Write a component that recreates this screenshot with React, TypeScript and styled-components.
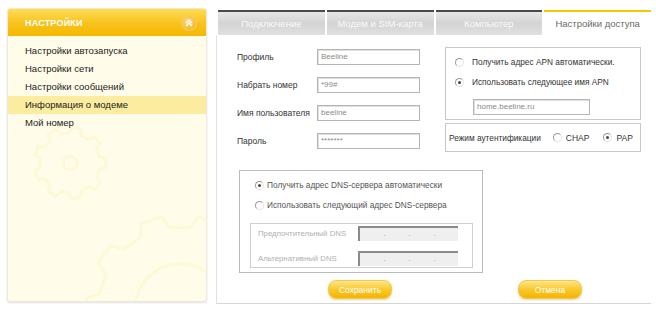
import React from "react";
import styled, { createGlobalStyle } from "styled-components";

const Global = createGlobalStyle`
  html, body { margin: 0; padding: 0; background: #fff; }
  body { font-family: "Liberation Sans", Arial, sans-serif; color: #222; }
`;

const Page = styled.div`
  display: flex;
  gap: 9px;
  padding: 8px 5px 0 7px;
  width: 656px;
  height: 313px;
  box-sizing: border-box;
`;

const Sidebar = styled.div`
  position: relative;
  width: 200px;
  height: 294px;
  box-sizing: border-box;
  background: #fffde9;
  border: 1px solid #eeeadb;
  border-radius: 3px;
  box-shadow: 0 1px 2px rgba(0, 0, 0, 0.12);
  overflow: hidden;
`;

const SideHeader = styled.div`
  position: relative;
  z-index: 1;
  height: 27px;
  display: flex;
  align-items: center;
  justify-content: space-between;
  padding: 0 9px 0 17px;
  background: linear-gradient(#fddc55, #f8c21c 55%, #f5b700);
  color: #fff;
  font-weight: bold;
  font-size: 9px;
  letter-spacing: 0.2px;
`;

const Collapse = styled.span`
  display: flex;
  align-items: center;
  justify-content: center;
  width: 16px;
  height: 16px;
  box-sizing: border-box;
  border-radius: 50%;
  background: radial-gradient(circle at 40% 35%, #fbd776, #f2b31e);
  border: 1px solid #f7cf60;
`;

const SideList = styled.ul`
  position: relative;
  z-index: 1;
  list-style: none;
  margin: 0;
  padding: 6px 0 0;
`;

const SideItem = styled.li<{ $active?: boolean }>`
  height: 18px;
  line-height: 18px;
  padding-left: 17px;
  font-size: 9.5px;
  color: #222;
  background: ${(p) => (p.$active ? "#fcec9f" : "transparent")};
`;

const Gears = styled.svg`
  position: absolute;
  left: 0;
  top: 0;
  z-index: 0;
`;

const Main = styled.div`
  flex: 1;
  display: flex;
  flex-direction: column;
  height: 296px;
`;

const Tabs = styled.div`
  display: flex;
  gap: 2px;
  padding: 2px 0 0 2px;
`;

const Tab = styled.div<{ $active?: boolean }>`
  flex: 1;
  height: 23px;
  display: flex;
  align-items: center;
  justify-content: center;
  font-size: 9.5px;
  border-top: 2px solid ${(p) => (p.$active ? "#f6c800" : "#4a4a4a")};
  background: ${(p) =>
    p.$active ? "#fff" : "linear-gradient(#e6e6e6, #d4d4d4 50%, #e0e0e0)"};
  color: ${(p) => (p.$active ? "#6a6a6a" : "#fafafa")};
`;

const Body = styled.div`
  flex: 1;
  display: flex;
  flex-direction: column;
  border-left: 1px solid #e2e2e2;
  border-bottom: 1px solid #d6d6d6;
  padding: 12px 0 0 20px;
`;

const TopRow = styled.div`
  display: flex;
  gap: 25px;
`;

const Fields = styled.div`
  display: grid;
  grid-template-columns: 80px 103px;
  grid-auto-rows: 16px;
  row-gap: 12px;
  align-items: center;
  padding-top: 2px;
`;

const Label = styled.span<{ $muted?: boolean }>`
  font-size: ${(p) => (p.$muted ? "7.8px" : "8.5px")};
  white-space: nowrap;
  color: ${(p) => (p.$muted ? "#b0b0b0" : "#333")};
`;

const Input = styled.div<{ $w?: number }>`
  box-sizing: border-box;
  width: ${(p) => (p.$w ? `${p.$w}px` : "100%")};
  height: 16px;
  border: 1px solid #b5b5b5;
  box-shadow: inset 1px 1px 0 #e0e0e0;
  background: #fff;
  font-size: 8px;
  color: #8a8a8a;
  padding: 1px 3px;
  line-height: 12px;
`;

const RightCol = styled.div`
  width: 196px;
  display: flex;
  flex-direction: column;
  gap: 3px;
`;

const Box = styled.div`
  box-sizing: border-box;
  border: 1px solid #c8c8c8;
  background: #fff;
`;

const ApnBox = styled(Box)`
  height: 73px;
  padding: 9px 0 0 9px;
  display: flex;
  flex-direction: column;
  gap: 10px;
`;

const AuthBox = styled(Box)`
  height: 29px;
  display: flex;
  align-items: center;
  padding-left: 3px;
  overflow: hidden;
`;

const Option = styled.label`
  display: flex;
  align-items: center;
  gap: 8px;
  font-size: 8.3px;
  white-space: nowrap;
  color: #333;
`;

const Radio = styled.span<{ $checked?: boolean }>`
  position: relative;
  flex: none;
  width: 9px;
  height: 9px;
  box-sizing: border-box;
  border-radius: 50%;
  border: 1px solid #9a9a9a;
  border-right-color: #e4e4e4;
  border-bottom-color: #e4e4e4;
  background: #fff;
  &::after {
    content: "";
    display: ${(p) => (p.$checked ? "block" : "none")};
    position: absolute;
    left: 2px;
    top: 2px;
    width: 3px;
    height: 3px;
    border-radius: 50%;
    background: #444;
  }
`;

const Indent = styled.div`
  padding-left: 18px;
  margin-top: 2px;
`;

const AuthLabel = styled.span`
  font-size: 8.3px;
  white-space: nowrap;
  color: #333;
  margin-right: 12px;
`;

const AuthOpt = styled(Option)`
  gap: 4px;
  margin-right: 14px;
  font-size: 8.5px;
`;

const DnsBox = styled(Box)`
  margin: 18px 0 0 2px;
  width: 244px;
  height: 103px;
  padding: 9px 9px 4px 10px;
  display: flex;
  flex-direction: column;
  gap: 10px;
  border-color: #bbb;
`;

const DnsOpt = styled(Option)`
  gap: 3px;
  margin-left: 5px;
  color: #555;
`;

const DnsInner = styled(Box)`
  flex: 1;
  margin-top: 3px;
  display: grid;
  grid-template-columns: 100px 100px;
  grid-auto-rows: 15px;
  row-gap: 10px;
  align-content: center;
  align-items: center;
  padding-left: 7px;
  border-color: #cfcfcf;
`;

const IpField = styled.div`
  box-sizing: border-box;
  height: 15px;
  border-top: 2px solid #8a8a8a;
  border-left: 2px solid #8a8a8a;
  background: #efefef;
  display: grid;
  grid-template-columns: repeat(3, 25px);
  padding-left: 12px;
  font-size: 8px;
  color: #999;
  line-height: 11px;
  span { text-align: center; }
`;

const Buttons = styled.div`
  display: flex;
  gap: 126px;
  margin-top: 7px;
  padding-left: 91px;
`;

const Button = styled.button`
  width: 64px;
  height: 19px;
  border: 1px solid #f2c850;
  border-radius: 8px;
  background: linear-gradient(#fde58a, #f9c82b 50%, #f4b400);
  box-shadow: 0 1px 2px rgba(180, 130, 0, 0.35);
  color: #fff;
  font-family: inherit;
  font-size: 8.5px;
  padding: 0;
`;

function gearPath(cx: number, cy: number, r: number, teeth: number, depth: number) {
  const pts: string[] = [];
  const step = (Math.PI * 2) / teeth;
  for (let i = 0; i < teeth; i++) {
    const a = i * step;
    const seq = [
      [a - step * 0.3, r],
      [a - step * 0.18, r + depth],
      [a + step * 0.18, r + depth],
      [a + step * 0.3, r],
    ];
    for (const [ang, rad] of seq) {
      pts.push(`${(cx + Math.cos(ang) * rad).toFixed(1)},${(cy + Math.sin(ang) * rad).toFixed(1)}`);
    }
  }
  return "M" + pts.join("L") + "Z";
}

const menu = [
  "Настройки автозапуска",
  "Настройки сети",
  "Настройки сообщений",
  "Информация о модеме",
  "Мой номер",
];

const tabs = ["Подключение", "Модем и SIM-карта", "Компьютер", "Настройки доступа"];

const fields = [
  ["Профиль", "Beeline"],
  ["Набрать номер", "*99#"],
  ["Имя пользователя", "beeline"],
  ["Пароль", "*******"],
];

export default function App() {
  return (
    <>
      <Global />
      <Page>
        <Sidebar>
          <Gears width="200" height="294" viewBox="0 0 200 294">
            <g fill="none" stroke="#fdf8d6" strokeWidth="3" strokeLinejoin="round">
              <path d={gearPath(62, 154, 30, 9, 6)} />
              <circle cx="62" cy="154" r="7" />
              <path d={gearPath(172, 300, 82, 10, 12)} />
              <circle cx="172" cy="300" r="45" />
            </g>
          </Gears>
          <SideHeader>
            НАСТРОЙКИ
            <Collapse>
              <svg width="8" height="8" viewBox="0 0 8 8">
                <path d="M1 4 L4 1 L7 4 M1 7 L4 4 L7 7" fill="none" stroke="#fff" strokeWidth="1.3" />
              </svg>
            </Collapse>
          </SideHeader>
          <SideList>
            {menu.map((m, i) => (
              <SideItem key={m} $active={i === 3}>
                {m}
              </SideItem>
            ))}
          </SideList>
        </Sidebar>
        <Main>
          <Tabs>
            {tabs.map((t, i) => (
              <Tab key={t} $active={i === 3}>
                {t}
              </Tab>
            ))}
          </Tabs>
          <Body>
            <TopRow>
              <Fields>
                {fields.map(([l, v]) => (
                  <React.Fragment key={l}>
                    <Label>{l}</Label>
                    <Input>{v}</Input>
                  </React.Fragment>
                ))}
              </Fields>
              <RightCol>
                <ApnBox>
                  <Option>
                    <Radio />
                    Получить адрес APN автоматически.
                  </Option>
                  <Option>
                    <Radio $checked />
                    Использовать следующее имя APN
                  </Option>
                  <Indent>
                    <Input $w={117}>home.beeline.ru</Input>
                  </Indent>
                </ApnBox>
                <AuthBox>
                  <AuthLabel>Режим аутентификации</AuthLabel>
                  <AuthOpt>
                    <Radio />
                    CHAP
                  </AuthOpt>
                  <AuthOpt>
                    <Radio $checked />
                    PAP
                  </AuthOpt>
                </AuthBox>
              </RightCol>
            </TopRow>
            <DnsBox>
              <DnsOpt>
                <Radio $checked />
                Получить адрес DNS-сервера автоматически
              </DnsOpt>
              <DnsOpt>
                <Radio />
                Использовать следующий адрес DNS-сервера
              </DnsOpt>
              <DnsInner>
                <Label $muted>Предпочтительный DNS</Label>
                <IpField>
                  <span>.</span>
                  <span>.</span>
                  <span>.</span>
                </IpField>
                <Label $muted>Альтернативный DNS</Label>
                <IpField>
                  <span>.</span>
                  <span>.</span>
                  <span>.</span>
                </IpField>
              </DnsInner>
            </DnsBox>
            <Buttons>
              <Button>Сохранить</Button>
              <Button>Отмена</Button>
            </Buttons>
          </Body>
        </Main>
      </Page>
    </>
  );
}
